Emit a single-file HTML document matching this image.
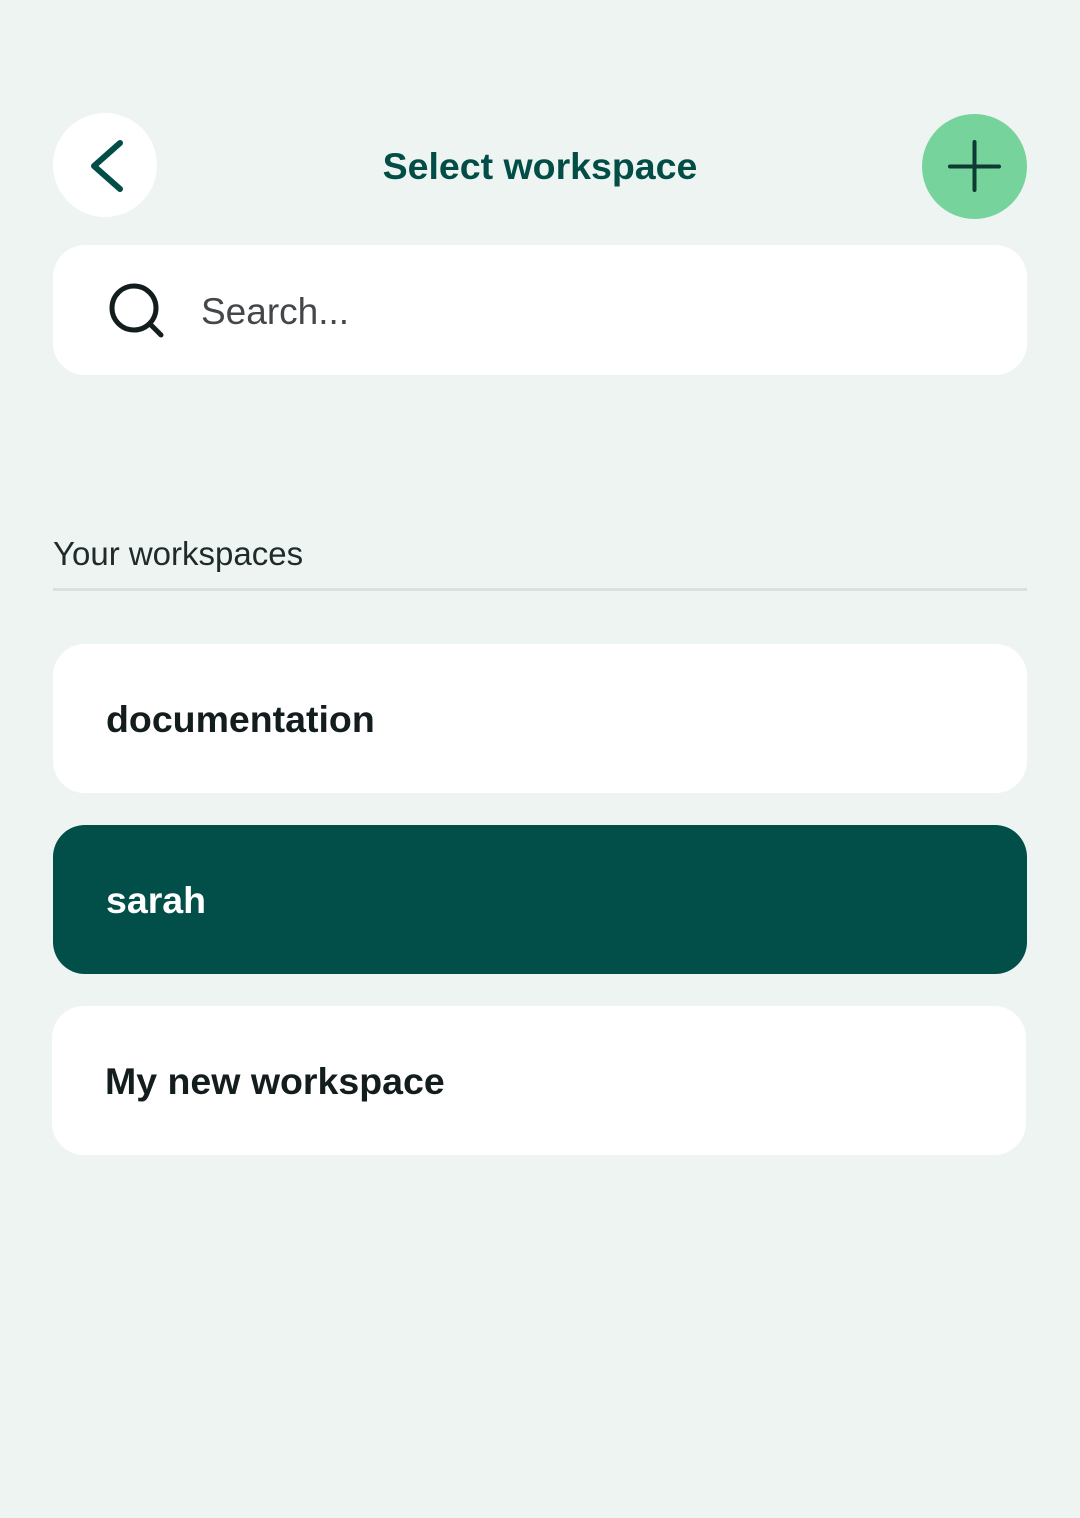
<!DOCTYPE html>
<html><head><meta charset="utf-8"><style>
*{margin:0;padding:0;box-sizing:border-box}
body{width:1080px;height:1518px;background:#eef4f1;font-family:"Liberation Sans",sans-serif;position:relative;overflow:hidden}
.abs{position:absolute}
.back{left:53px;top:113px;width:104px;height:104px;border-radius:50%;background:#fff}
.add{left:922px;top:114px;width:105px;height:105px;border-radius:50%;background:#76d39c}
.title{left:0;width:1080px;top:145px;text-align:center;font-size:37.5px;font-weight:bold;color:#034d47}
.search{left:53px;top:245px;width:974px;height:130px;border-radius:32px;background:#fff}
.stext{left:201px;top:291px;font-size:37px;color:#44474a}
.label{left:53px;top:535px;font-size:33px;color:#1f2a2a}
.line{left:53px;top:588px;width:974px;height:3px;background:#dcdfdd}
.card{left:53px;width:974px;height:149px;border-radius:32px;background:#fff}
.card span{position:absolute;left:53px;top:54px;font-size:37.5px;font-weight:bold;color:#141d1e}
</style></head><body>
<div class="abs back"><svg width="104" height="104" viewBox="0 0 104 104"><path d="M67 30 L41 53 L67 76" fill="none" stroke="#034d47" stroke-width="6" stroke-linecap="round" stroke-linejoin="round"/></svg></div>
<div class="abs title">Select workspace</div>
<div class="abs add"><svg width="105" height="105" viewBox="0 0 105 105"><path d="M52.5 28 V76 M28 52.5 H77" stroke="#0f3a33" stroke-width="4" stroke-linecap="round"/></svg></div>
<div class="abs search"></div>
<svg class="abs" style="left:106px;top:280px" width="62" height="62" viewBox="0 0 62 62"><circle cx="28" cy="28" r="22" fill="none" stroke="#141d1e" stroke-width="5"/><path d="M44 44 L55 55" stroke="#141d1e" stroke-width="5" stroke-linecap="round"/></svg>
<div class="abs stext">Search...</div>
<div class="abs label">Your workspaces</div>
<div class="abs line"></div>
<div class="abs card" style="top:644px"><span>documentation</span></div>
<div class="abs card" style="top:825px;background:#024e48"><span style="color:#fff">sarah</span></div>
<div class="abs card" style="top:1006px;left:52px"><span>My new workspace</span></div>
</body></html>
